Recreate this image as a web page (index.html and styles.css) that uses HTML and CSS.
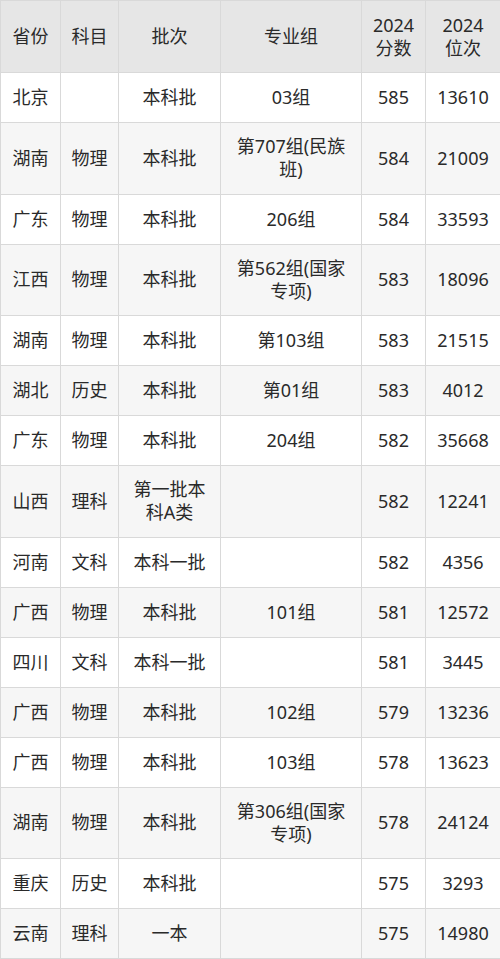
FILE: index.html
```html
<!DOCTYPE html>
<html lang="zh">
<head>
<meta charset="utf-8">
<link rel="stylesheet" href="styles.css">
</head>
<body>
<table class="score-table">
  <colgroup>
    <col class="c-prov"><col class="c-subj"><col class="c-batch"><col class="c-group"><col class="c-score"><col class="c-rank">
  </colgroup>
  <thead>
    <tr class="head"><th>省份</th><th>科目</th><th>批次</th><th>专业组</th><th>2024 分数</th><th>2024 位次</th></tr>
  </thead>
  <tbody>
    <tr><td>北京</td><td></td><td>本科批</td><td>03组</td><td>585</td><td>13610</td></tr>
    <tr class="tall"><td>湖南</td><td>物理</td><td>本科批</td><td>第707组(民族班)</td><td>584</td><td>21009</td></tr>
    <tr><td>广东</td><td>物理</td><td>本科批</td><td>206组</td><td>584</td><td>33593</td></tr>
    <tr class="tall"><td>江西</td><td>物理</td><td>本科批</td><td>第562组(国家专项)</td><td>583</td><td>18096</td></tr>
    <tr><td>湖南</td><td>物理</td><td>本科批</td><td>第103组</td><td>583</td><td>21515</td></tr>
    <tr><td>湖北</td><td>历史</td><td>本科批</td><td>第01组</td><td>583</td><td>4012</td></tr>
    <tr><td>广东</td><td>物理</td><td>本科批</td><td>204组</td><td>582</td><td>35668</td></tr>
    <tr class="tall"><td>山西</td><td>理科</td><td>第一批本科A类</td><td></td><td>582</td><td>12241</td></tr>
    <tr><td>河南</td><td>文科</td><td>本科一批</td><td></td><td>582</td><td>4356</td></tr>
    <tr><td>广西</td><td>物理</td><td>本科批</td><td>101组</td><td>581</td><td>12572</td></tr>
    <tr><td>四川</td><td>文科</td><td>本科一批</td><td></td><td>581</td><td>3445</td></tr>
    <tr><td>广西</td><td>物理</td><td>本科批</td><td>102组</td><td>579</td><td>13236</td></tr>
    <tr><td>广西</td><td>物理</td><td>本科批</td><td>103组</td><td>578</td><td>13623</td></tr>
    <tr class="tall"><td>湖南</td><td>物理</td><td>本科批</td><td>第306组(国家专项)</td><td>578</td><td>24124</td></tr>
    <tr><td>重庆</td><td>历史</td><td>本科批</td><td></td><td>575</td><td>3293</td></tr>
    <tr><td>云南</td><td>理科</td><td>一本</td><td></td><td>575</td><td>14980</td></tr>
  </tbody>
</table>
</body>
</html>
```
FILE: styles.css
```css
html, body {
  margin: 0;
  padding: 0;
  background: #ffffff;
}
.score-table {
  width: 500px;
  table-layout: fixed;
  border-collapse: collapse;
  font-family: "Noto Sans", "Noto Sans CJK SC", sans-serif;
  font-size: 18px;
  line-height: 23px;
  color: #2a2a2a;
}
.c-prov { width: 60px; }
.c-subj { width: 58px; }
.c-batch { width: 102px; }
.c-group { width: 141px; }
.c-score { width: 64px; }
.c-rank { width: 75px; }
.score-table tr {
  height: 50px;
}
.score-table tr.head {
  height: 72px;
}
.score-table tr.tall {
  height: 71.5px;
}
.score-table th,
.score-table td {
  border: 1px solid #d9d9d9;
  padding: 0 9px;
  text-align: center;
  vertical-align: middle;
  font-weight: normal;
}
.score-table thead th {
  background: #e6e6e6;
}
.score-table tbody tr:nth-child(even) td {
  background: #f6f6f6;
}
.score-table tbody tr:nth-child(odd) td {
  background: #ffffff;
}
```
